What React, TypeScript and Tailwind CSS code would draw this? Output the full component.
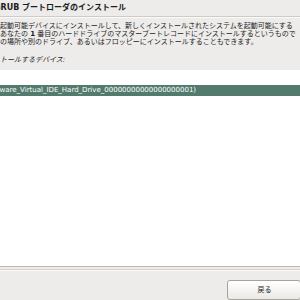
import React from "react";

export default function App() {
  const font = { fontFamily: '"DejaVu Sans", "Noto Sans CJK JP", sans-serif' };
  return (
    <div className="w-[300px] h-[300px] overflow-hidden bg-[#edeceb] text-[#1c1c1c] flex flex-col" style={font}>
      <div className="h-[16px] flex items-center whitespace-nowrap overflow-hidden">
        <span className="ml-[-6px] text-[8px] font-bold leading-[8px]">GRUB ブートローダのインストール</span>
      </div>
      <div className="h-px bg-[#cfccc6]" />
      <div className="h-px bg-[#fbfaf9]" />
      <div className="mt-[4px] flex flex-col text-[7px] leading-[8px] whitespace-nowrap overflow-hidden">
        <span>起動可能デバイスにインストールして、新しくインストールされたシステムを起動可能にする</span>
        <span>あなたの <b>1</b> 番目のハードドライブのマスターブートレコードにインストールするというもので</span>
        <span>の場所や別のドライブ、あるいはフロッピーにインストールすることもできます。</span>
      </div>
      <div className="mt-[10px] text-[7px] leading-[8px] italic whitespace-nowrap overflow-hidden">
        <span>トールするデバイス:</span>
      </div>
      <div className="mt-[6px] h-[199px] bg-white border-b border-[#bcb9b3] flex flex-col overflow-hidden">
        <div className="mt-[15px] h-[11px] bg-[#527b6e] text-white text-[7px] leading-[11px] whitespace-nowrap overflow-hidden">
          <span className="ml-[-14px]">(VMware_Virtual_IDE_Hard_Drive_00000000000000000001)</span>
        </div>
      </div>
      <div className="mt-[2px] h-px bg-[#d3d0cb]" />
      <div className="h-px bg-[#fbfaf9]" />
      <div className="mt-[9px] flex justify-end">
        <button className="w-[74px] h-[20px] mr-[-1px] rounded-[3px] border border-[#a7a39c] bg-gradient-to-b from-white to-[#ebe9e5] text-[7px] leading-[18px] text-[#1c1c1c] pl-[1px]" style={font}>
          戻る
        </button>
      </div>
    </div>
  );
}
